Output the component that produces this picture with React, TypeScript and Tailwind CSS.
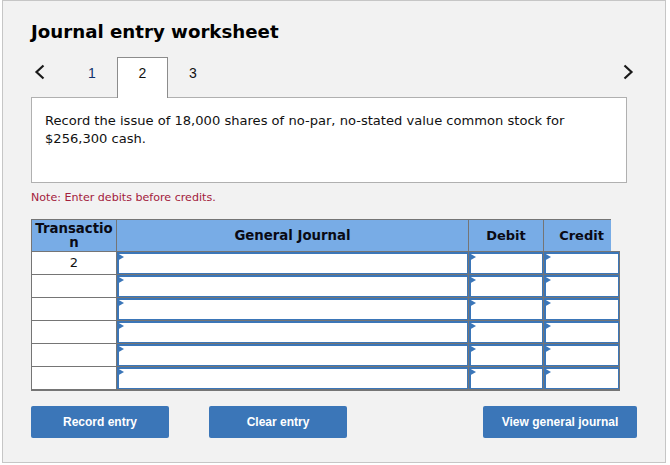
const dejavu = "font-['DejaVu_Sans',Verdana,sans-serif]";
const arial = "font-['Liberation_Sans',Arial,sans-serif]";

function EntryCell({ last }: { last?: boolean }) {
  return (
    <div className={`relative bg-[#757575] pl-px pt-px ${last ? "pr-px" : ""}`}>
      <div className="h-[22px] border-y border-x border-[#3b76b8] border-l-2 border-t-2 bg-white" />
      <svg className="absolute left-[1px] top-[2px]" width="7" height="8" viewBox="0 0 7 8">
        <path d="M0 0 L7 4 L0 8 Z" fill="#3b76b8" />
      </svg>
    </div>
  );
}

function Button({ label, className }: { label: string; className: string }) {
  return (
    <button className={`h-[32px] rounded-[2px] bg-[#3b76b8] text-center text-[12px] font-bold text-white ${arial} ${className}`}>
      {label}
    </button>
  );
}

export default function App() {
  const rows = [0, 1, 2, 3, 4, 5];
  return (
    <div className="h-[465px] w-[670px] bg-white pl-[2px]">
      <div className="h-[463px] w-[664px] border border-[#c6c6c6] bg-[#f2f2f2] pl-[28px] pt-[18px]">
        <h1 className={`h-[24px] text-[18.2px] font-bold leading-[26px] text-black ${dejavu}`}>Journal entry worksheet</h1>

        <div className={`mt-[14px] flex h-[40px] w-[596px] items-start text-[14px] leading-[16px] text-[#111] ${arial}`}>
          <svg className="ml-[3px] mt-[7px]" width="11" height="16" viewBox="0 0 11 16">
            <path d="M9.5 1.5 L2.5 8 L9.5 14.5" fill="none" stroke="#1a1a1a" strokeWidth="2.2" />
          </svg>
          <span className="ml-[42px] mt-[8px] w-[10px] text-center text-[#10326b]">1</span>
          <div className="relative z-10 ml-[20px] h-[41px] w-[51px] border border-b-0 border-[#8c8c8c] bg-white pt-[7px] text-center">2</div>
          <span className="ml-[20px] mt-[8px] w-[10px] text-center">3</span>
          <svg className="ml-auto mr-[-7px] mt-[7px]" width="11" height="16" viewBox="0 0 11 16">
            <path d="M1.5 1.5 L8.5 8 L1.5 14.5" fill="none" stroke="#1a1a1a" strokeWidth="2.2" />
          </svg>
        </div>

        <div className={`h-[86px] w-[596px] border border-[#b0b0b0] bg-white px-[13px] pt-[14px] text-[13.08px] leading-[18px] text-[#111] ${dejavu}`}>
          Record the issue of 18,000 shares of no-par, no-stated value common stock for
          <br />
          $256,300 cash.
        </div>

        <p className={`mt-[8px] h-[14px] text-[11.1px] leading-[14px] text-[#a3203c] ${dejavu}`}>Note: Enter debits before credits.</p>

        <div className="mt-[14px] w-[589px]">
          <div className={`grid h-[32px] w-[580px] grid-cols-[85px_352px_75px_68px] border-t border-[#757575] bg-[#78ace6] text-[13.3px] font-bold leading-[14px] text-[#0a0a14] ${dejavu}`}>
            <div className="break-all border-l border-[#757575] pt-[2px] text-center">Transaction</div>
            <div className="flex items-center justify-center border-l border-[#757575]">General Journal</div>
            <div className="flex items-center justify-center border-l border-[#757575] text-[13px]">Debit</div>
            <div className="flex items-center justify-center border-l border-[#757575] pl-[8px] text-[13px]">Credit</div>
          </div>
          {rows.map((r) => (
            <div key={r} className="grid h-[23px] grid-cols-[85px_352px_75px_77px]">
              <div className={`border-l border-t border-[#757575] bg-white text-center text-[13px] leading-[22px] text-[#111] ${dejavu}`}>
                {r === 0 ? "2" : ""}
              </div>
              <EntryCell />
              <EntryCell />
              <EntryCell last />
            </div>
          ))}
          <div className="h-[2px] w-[589px] bg-[#757575]" />
        </div>

        <div className="mt-[15px] flex w-[606px]">
          <Button label="Record entry" className="w-[138px]" />
          <Button label="Clear entry" className="ml-[40px] w-[138px]" />
          <Button label="View general journal" className="ml-auto w-[154px]" />
        </div>
      </div>
    </div>
  );
}
